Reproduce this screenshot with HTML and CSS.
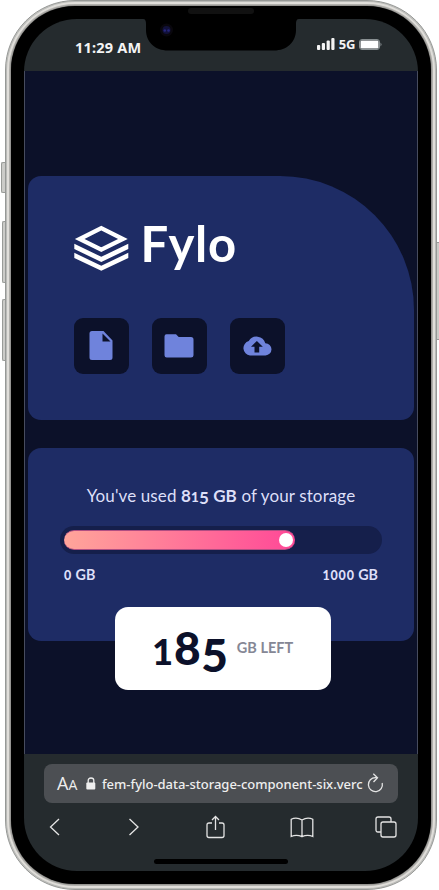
FILE: index.html
```html
<!DOCTYPE html>
<html lang="en">
<head>
<meta charset="utf-8">
<title>Fylo data storage</title>
<link rel="stylesheet" href="styles.css">
</head>
<body>
<div class="device">
  <i class="side mute"></i><i class="side vol-up"></i><i class="side vol-down"></i><i class="side power"></i>
  <div class="frame">
    <div class="bezel">
      <i class="speaker"></i>
      <div class="screen">
        <header class="status">
          <svg class="notch" width="156" height="32" viewBox="0 0 156 32"><path d="M0 0C2.500 0 3 2 3 5V11C3 23 12 31.500 25 31.500H131C144 31.500 153 23 153 11V5C153 2 153.500 0 156 0Z"/><circle cx="23.500" cy="11" r="6.500" fill="#09070d"/><circle cx="23.500" cy="11" r="4" fill="#11113a"/><circle cx="21.800" cy="11.500" r="1.300" fill="#25257c"/><circle cx="25.500" cy="11.500" r="1.300" fill="#25257c"/></svg>
          <span class="time">11:29 AM</span>
          <span class="signal">
            <svg width="18" height="12" viewBox="0 0 18 12" fill="#f4f4f4"><rect y="7" width="3.200" height="5" rx="1"/><rect x="4.800" y="5" width="3.200" height="7" rx="1"/><rect x="9.600" y="2.500" width="3.200" height="9.500" rx="1"/><rect x="14.300" width="3.200" height="12" rx="1"/></svg>
            <b>5G</b>
            <svg width="23" height="11" viewBox="0 0 23 11"><rect x=".5" y=".5" width="20" height="10" rx="2.500" fill="none" stroke="#899092"/><rect x="1.500" y="1.500" width="18" height="8" rx="1.300" fill="#fff"/><path d="M21.500 3.500q2 2 0 4z" fill="#899092"/></svg>
          </span>
        </header>
        <main>
          <section class="card brand">
            <div class="logo">
              <svg width="55" height="46" viewBox="0 0 55 46"><path d="M27.300 3.200 49 14 27.300 24.700 5.600 14Z" fill="none" stroke="#fff" stroke-width="4.200"/><path d="M.3 18.800v5.200l27 13 27-13v-5.200l-27 13ZM.3 27.800V33l27 12.700L54.300 33v-5.200l-27 13Z" fill="#fff"/></svg>
              <h1>Fylo</h1>
            </div>
            <div class="actions">
              <button><svg width="24" height="30" viewBox="0 0 24 30"><path fill-rule="evenodd" d="M3 0H14.500L23.500 9.500V26.500Q23.500 29 21 29H3Q.5 29 .5 26.500V2.500Q.5 0 3 0ZM13.500 2.500V10.500H21.500Z"/></svg></button>
              <button><svg width="30" height="24" viewBox="0 0 30 24"><path d="M2.500.2H12l2.700 2.800H27q2.500 0 2.500 2.500v15.700q0 2.300-2.500 2.300H2.700Q.5 23.500.5 21.200V2.500Q.5.2 2.500.2Z"/></svg></button>
              <button><svg width="30" height="20" viewBox="0 0 30 20"><path fill-rule="evenodd" d="M23.300 7.200A9 9 0 0 0 6.800 5.100 7.300 7.300 0 0 0 8 19.400H23.500A6.100 6.100 0 0 0 23.300 7.200ZM17.200 10.700V16.500H12.500V10.700H9L14.900 5 20.800 10.700Z"/></svg></button>
            </div>
          </section>
          <section class="card storage">
            <p class="usage">You've used <b>8<span class="small">1</span><span class="drop">5</span> GB</b> of your storage</p>
            <div class="track"><div class="fill"><i></i></div></div>
            <div class="limits"><span><span class="small">0</span> GB</span><span><span class="small">1000</span> GB</span></div>
            <div class="left"><strong><span class="small">1</span>8<span class="drop">5</span></strong><span class="unit">GB LEFT</span></div>
          </section>
        </main>
        <footer>
          <div class="address">
            <span class="aa">A<small>A</small></span>
            <svg class="lock" width="10" height="13" viewBox="0 0 10 13"><path d="M2.200 6V3.600Q2.200 1 5 1t2.800 2.600V6" fill="none" stroke="#eee" stroke-width="1.300"/><rect x=".3" y="5.500" width="9" height="7" rx="1" fill="#eee"/></svg>
            <span class="url">fem-fylo-data-storage-component-six.verc</span>
            <svg class="reload" width="17" height="20" viewBox="0 0 17 20"><path d="M10 4.600H8.500A7 7 0 1 0 15.200 10M6.300.8l4.200 3.900-4 4.300" /></svg>
          </div>
          <nav>
            <svg width="12" height="18" viewBox="0 0 12 18"><path d="M10 1 1.500 9 10 17"/></svg>
            <svg width="12" height="18" viewBox="0 0 12 18"><path d="M1.500 1 10 9 1.500 17"/></svg>
            <svg width="19" height="24" viewBox="0 0 19 24"><path d="M6 8H3Q1 8 1 10V20.500Q1 22.500 3 22.500H16Q18 22.500 18 20.500V10Q18 8 16 8H13M9.500 15V1.500M6 5l3.500-3.500L13 5"/></svg>
            <svg width="24" height="21" viewBox="0 0 24 21"><path d="M12 3Q6.500-.5 1.200 2.300V19.500Q6.500 17 12 19.700 17.500 17 22.800 19.500V2.300Q17.500-.5 12 3V19.700"/></svg>
            <svg width="22" height="22" viewBox="0 0 22 22"><rect x="6" y="6" width="15" height="15" rx="2"/><path d="M6 16H3Q1 16 1 14V3Q1 1 3 1H14Q16 1 16 3V6"/></svg>
          </nav>
          <i class="home"></i>
        </footer>
      </div>
    </div>
  </div>
</div>
</body>
</html>
```
FILE: styles.css
```css
* { box-sizing: border-box; }
body { margin: 0; background: #fff; font-family: Lato, "Open Sans", sans-serif; overflow: hidden; }
.device { position: relative; width: 439px; height: 890px; padding: 0 2px 0 5px; }
.frame { height: 890px; padding: 5px; border-radius: 70px; border: 1px solid #969896; background: #d3d2ce; box-shadow: inset 0 0 0 1px #b9bab7, inset 0 0 0 3px #e0deda, inset 0 0 2px 5px #b9b8b4; }
.bezel { position: relative; height: 878px; padding: 13px; background: #000; border-radius: 64px; box-shadow: 0 0 2px #222; }
.screen { height: 852px; border-radius: 53px; overflow: hidden; background: #252b2e; display: flex; flex-direction: column; }
.speaker { position: absolute; left: 177px; top: 2px; width: 66px; height: 6px; border-radius: 3px; background: #111; }
.side { position: absolute; background: #cbcbc8; border: 1px solid #999b98; border-right: 0; border-radius: 2px 0 0 2px; }
.mute { left: 1px; top: 162px; width: 4px; height: 31px; }
.vol-up, .vol-down { left: 2px; top: 221px; width: 3px; height: 62px; }
.vol-down { top: 299px; }
.power { left: 437px; top: 242px; width: 2px; height: 98px; border: 1px solid #999; border-width: 1px 0; border-radius: 0; }
.status { position: relative; flex: 0 0 52px; display: flex; justify-content: space-between; padding: 19px 35px 0 51px; color: #f4f4f4; font-family: "Noto Sans"; }
.notch { position: absolute; left: 119px; top: 0; }
.time { font-weight: 700; font-size: 14.500px; line-height: 18px; letter-spacing: .2px; }
.signal { display: flex; height: 12px; align-items: center; gap: 4px; margin-right: 1px; }
.signal b { font-size: 13px; letter-spacing: -.3px; }
main { flex: 0 0 683px; background: #0c1129; border: solid #474c5e; border-width: 0 1px; padding: 105px 3px 0; }
.card { background: #1e2c65; border-radius: 13px; }
.brand { height: 244px; border-top-right-radius: 134px; padding: 45px 45px 0 45.500px; }
.logo { display: flex; height: 56px; gap: 12px; }
.logo svg { margin-top: 4px; }
h1 { margin: -6px 0 0; font: 700 49px/56px Lato; color: #fff; letter-spacing: .8px; }
.actions { display: flex; gap: 23px; margin-top: 41px; }
button { width: 55px; height: 56px; border: 0; padding: 0; background: #0c112a; border-radius: 9px; display: grid; place-items: center; fill: #6f83dc; }
.storage { height: 193px; margin-top: 27.500px; padding: 35px 32px 0; display: flex; flex-direction: column; color: #dddff8; }
.usage { margin: 0; text-align: center; font-size: 17px; line-height: 26px; letter-spacing: .12px; white-space: nowrap; }
.small { font-size: .79em; font-weight: 900; }
.limits .small { font-size: 12.500px; letter-spacing: .8px; }
.drop { position: relative; top: .15em; }
.track { flex: none; height: 28px; margin-top: 16.500px; padding: 4px; border-radius: 14px; background: #151f4b; }
.fill { width: 231px; height: 20px; border-radius: 10px; background: linear-gradient(90deg, #ffa59a, #ff4897); border: 1px solid #b04e82; border-width: 1px 0; display: flex; justify-content: flex-end; padding: 2px; }
.fill i { width: 14px; height: 14px; background: #fff; border-radius: 50%; }
.limits { display: flex; justify-content: space-between; padding: 0 4px; margin-top: 11px; font-weight: 700; font-size: 14.300px; line-height: 20px; }
.left { flex: none; width: 216px; height: 83px; margin: 20.500px 0 0 55px; background: #fff; border-radius: 13px; color: #0c112a; display: flex; align-items: center; gap: 8px; padding-left: 37px; white-space: nowrap; }
.left strong { font-size: 46px; line-height: 60px; font-weight: 900; letter-spacing: .8px; margin-top: 3px; }
.unit { color: #858795; font-size: 14.500px; font-weight: 700; margin-top: -1px; }
footer { flex: 1; padding: 10px 20px 0 20px; color: #eee; }
.address { height: 39px; border-radius: 8px; background: #4c4f53; display: flex; align-items: center; padding-left: 13px; white-space: nowrap; }
.aa { width: 29px; font: 18px/24px "Open Sans"; }
.aa small { font-size: 14px; }
.url { width: 260px; margin-left: 6px; font: 500 13px/20px "Noto Sans"; letter-spacing: -.02px; }
.reload { margin-left: 5px; margin-top: -2px; }
nav svg, .reload { fill: none; stroke: #e4e4e4; stroke-width: 1.300; }
nav { display: grid; grid-template-columns: 79px 78px 84px 85px 22px; align-items: center; height: 24px; margin-top: 12px; padding-left: 5px; }
.home { display: block; width: 134px; height: 5px; margin: 20px 0 0 110px; border-radius: 3px; background: #000; }
```
